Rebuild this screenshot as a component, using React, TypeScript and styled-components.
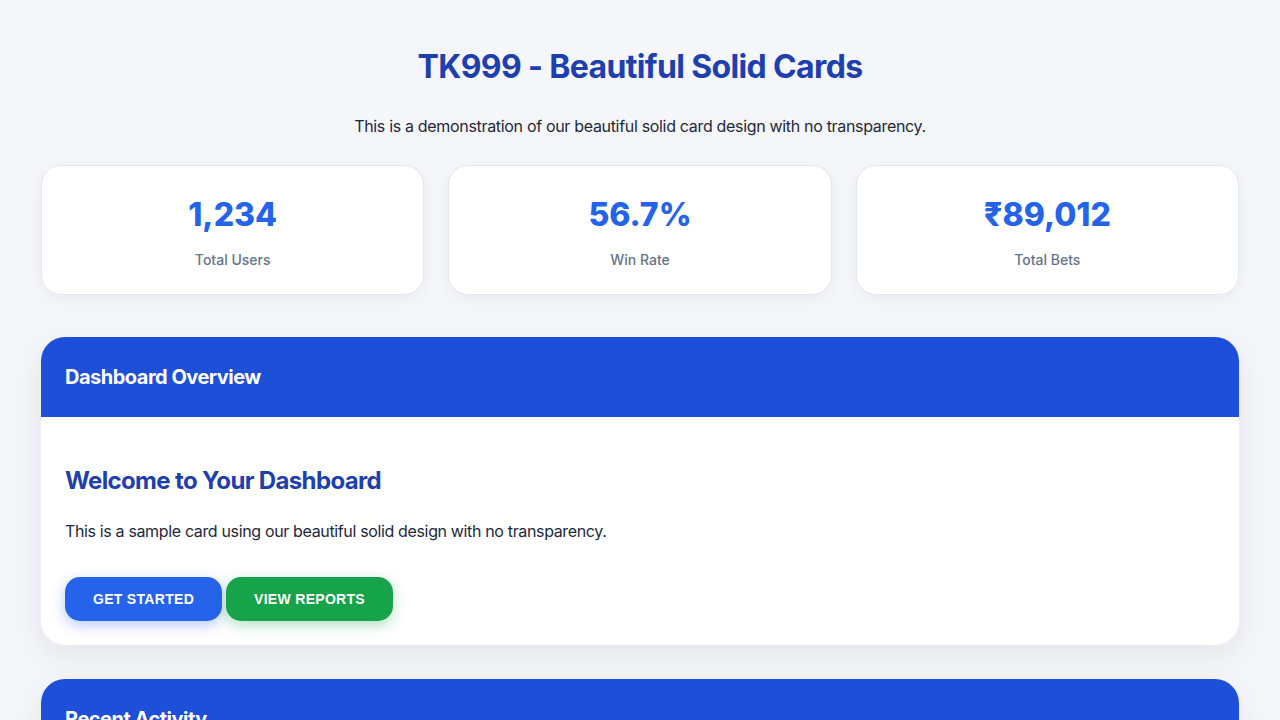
import React from "react";
import styled, { createGlobalStyle } from "styled-components";

const Global = createGlobalStyle`
  html, body { margin: 0; padding: 0; }
  body {
    background: #f5f6fa;
    font-family: Inter, "Noto Sans", sans-serif;
    color: #1e293b;
    -webkit-font-smoothing: antialiased;
  }
  * { box-sizing: border-box; }
`;

const Page = styled.div`
  padding: 48px 41px 40px;
`;

const Title = styled.h1`
  margin: 0;
  text-align: center;
  font-size: 32px;
  line-height: 38px;
  font-weight: 700;
  letter-spacing: -0.02em;
  color: #1e40af;
`;

const Subtitle = styled.p`
  margin: 28px 0 27px;
  text-align: center;
  font-size: 16px;
  line-height: 24px;
  letter-spacing: -0.02em;
  color: #1e293b;
`;

const StatGrid = styled.div`
  display: grid;
  grid-template-columns: repeat(3, 1fr);
  gap: 24px;
`;

const StatCard = styled.div`
  background: #ffffff;
  border: 1px solid #e2e8f0;
  border-radius: 20px;
  box-shadow: 0 4px 14px rgba(15, 23, 42, 0.05);
  padding: 30px 24px 24px;
  text-align: center;
`;

const StatValue = styled.div`
  font-size: 32px;
  line-height: 38px;
  font-weight: 800;
  color: #2563eb;
`;

const StatLabel = styled.div`
  margin-top: 16px;
  font-size: 14px;
  line-height: 20px;
  font-weight: 500;
  color: #64748b;
`;

const Panel = styled.section`
  margin-top: 42px;
  background: #ffffff;
  border-radius: 24px;
  overflow: hidden;
  box-shadow: 0 10px 30px rgba(15, 23, 42, 0.08);
  & + & {
    margin-top: 34px;
  }
`;

const PanelHeader = styled.div`
  background: #1d4fd8;
  height: 80px;
  padding: 0 24px;
  display: flex;
  align-items: center;
`;

const PanelTitle = styled.h3`
  margin: 0;
  font-size: 20px;
  line-height: 28px;
  font-weight: 700;
  letter-spacing: -0.025em;
  color: #ffffff;
`;

const PanelBody = styled.div`
  padding: 48px 24px 24px;
`;

const Heading = styled.h2`
  margin: 0;
  font-size: 24px;
  line-height: 32px;
  font-weight: 700;
  letter-spacing: -0.027em;
  color: #1e40af;
`;

const Text = styled.p`
  margin: 22px 0 34px;
  font-size: 16px;
  line-height: 24px;
  letter-spacing: -0.022em;
  color: #1e293b;
`;

const Actions = styled.div`
  display: flex;
  gap: 4px;
`;

const Button = styled.button<{ $tone: "blue" | "green" }>`
  height: 44px;
  padding: 0 28px;
  border: none;
  border-radius: 15px;
  font-family: "Liberation Sans", Arial, sans-serif;
  font-size: 14px;
  font-weight: 700;
  letter-spacing: 0.3px;
  text-transform: uppercase;
  color: #ffffff;
  cursor: pointer;
  background: ${(p) => (p.$tone === "blue" ? "#2563eb" : "#16a34a")};
  box-shadow: ${(p) =>
    p.$tone === "blue"
      ? "0 4px 14px rgba(37, 99, 235, 0.35)"
      : "0 4px 14px rgba(22, 163, 74, 0.35)"};
`;

const stats = [
  { value: "1,234", label: "Total Users" },
  { value: "56.7%", label: "Win Rate" },
  { value: "₹89,012", label: "Total Bets" },
];

export default function App() {
  return (
    <>
      <Global />
      <Page>
        <Title>TK999 - Beautiful Solid Cards</Title>
        <Subtitle>
          This is a demonstration of our beautiful solid card design with no transparency.
        </Subtitle>
        <StatGrid>
          {stats.map((s) => (
            <StatCard key={s.label}>
              <StatValue>{s.value}</StatValue>
              <StatLabel>{s.label}</StatLabel>
            </StatCard>
          ))}
        </StatGrid>
        <Panel>
          <PanelHeader>
            <PanelTitle>Dashboard Overview</PanelTitle>
          </PanelHeader>
          <PanelBody>
            <Heading>Welcome to Your Dashboard</Heading>
            <Text>
              This is a sample card using our beautiful solid design with no transparency.
            </Text>
            <Actions>
              <Button $tone="blue">Get Started</Button>
              <Button $tone="green">View Reports</Button>
            </Actions>
          </PanelBody>
        </Panel>
        <Panel>
          <PanelHeader>
            <PanelTitle>Recent Activity</PanelTitle>
          </PanelHeader>
          <PanelBody>
            <Heading>Latest Bets</Heading>
            <Text>Your most recent activity will appear here.</Text>
          </PanelBody>
        </Panel>
      </Page>
    </>
  );
}
